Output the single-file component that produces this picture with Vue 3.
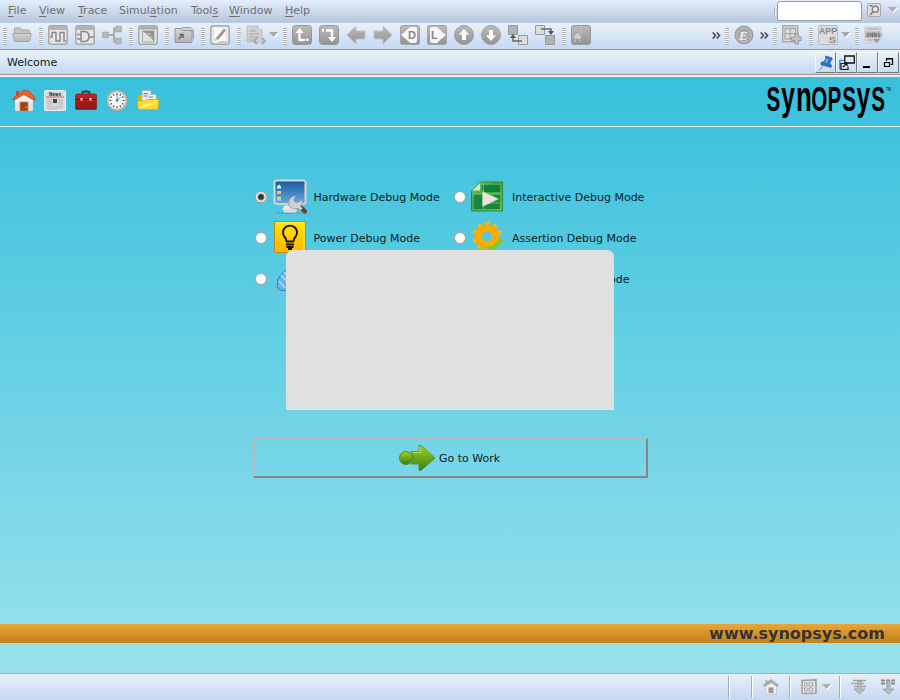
<script setup>
import { ref } from 'vue'
const menus = [['F', 'ile', ''], ['V', 'iew', ''], ['T', 'race', ''], ['a', 'tion', 'Simul'], ['s', '', 'Tool'], ['W', 'indow', ''], ['H', 'elp', '']]
const menuX = [31, 39, 41, 72, 38, 56, 40]
const left = ['|', 'folder', '|', 'wave', 'gate', 'tree', '|', 'win', '|', 'folder2', '|', 'edit', '|', 'doc', '|', 'upl', 'downr', 'back', 'fwd', 'dd', 'll', 'cup', 'cdown', 'hier1', 'hier2', '|', 'book']
const right = ['>>', '|', 'ee', '>>', '|', 'grid', '|', 'apps', '|', 'amba']
const mode = ref('hardware')
const modes = [
  { id: 'hardware', label: 'Hardware Debug Mode' },
  { id: 'interactive', label: 'Interactive Debug Mode' },
  { id: 'power', label: 'Power Debug Mode' },
  { id: 'assertion', label: 'Assertion Debug Mode' },
  { id: 'plug', label: '' },
  { id: 'last', label: 'ode' }
]
const teeth = [0, 36, 72, 108, 144, 180, 216, 252, 288, 324]
const ticks = [0, 30, 60, 90, 120, 150, 180, 210, 240, 270, 300, 330]
</script>

<template>
  <div class="app">
    <svg class="defs" width="0" height="0">
      <defs>
        <linearGradient id="gr" x1="0" y1="0" x2="0" y2="1"><stop offset="0" stop-color="#bcbcbc" /><stop offset="1" stop-color="#929292" /></linearGradient>
        <linearGradient id="lt" x1="0" y1="0" x2="0" y2="1"><stop offset="0" stop-color="#d5d5d5" /><stop offset="1" stop-color="#b4b4b4" /></linearGradient>
        <linearGradient id="scr" x1="0" y1="0" x2="0" y2="1"><stop offset="0" stop-color="#1c5a9f" /><stop offset="1" stop-color="#62a8df" /></linearGradient>
        <linearGradient id="yel" x1="0" y1="0" x2="0" y2="1"><stop offset="0" stop-color="#ffe600" /><stop offset="1" stop-color="#ffb400" /></linearGradient>
        <linearGradient id="grn" x1="0" y1="0" x2="0" y2="1"><stop offset="0" stop-color="#a2d217" /><stop offset="1" stop-color="#39801e" /></linearGradient>
        <linearGradient id="plate" x1="0" y1="0" x2="1" y2="1"><stop offset="0" stop-color="#8fd080" /><stop offset=".4" stop-color="#3fa548" /><stop offset="1" stop-color="#67bd5d" /></linearGradient>
        <linearGradient id="gear" x1="0" y1="0" x2="0" y2="1"><stop offset="0" stop-color="#ffc400" /><stop offset="1" stop-color="#f89000" /></linearGradient>
        <linearGradient id="red" x1="0" y1="0" x2="0" y2="1"><stop offset="0" stop-color="#c52222" /><stop offset="1" stop-color="#8b1515" /></linearGradient>
      </defs>
    </svg>

    <header class="menubar">
      <nav class="menus">
        <span v-for="(m, i) in menus" :key="i" class="menu" :style="{ width: menuX[i] + 'px' }">{{ m[2] }}<u>{{ m[0] }}</u>{{ m[1] }}</span>
      </nav>
      <div class="search">
        <i class="grip"></i><div class="field"></div>
        <svg class="find" width="14" height="14" viewBox="0 0 14 14"><rect x=".5" y=".5" width="13" height="13" rx="1.5" fill="#dedede" stroke="#aaa" /><path d="M2 2h4L4 4z" fill="#777" /><circle cx="8.3" cy="6.2" r="3" fill="#eee" stroke="#828282" stroke-width="1.4" /><path d="M6.2 8.6 3 12" stroke="#828282" stroke-width="1.8" /></svg>
        <svg width="10" height="6"><path d="M1 1h9L5.500 6z" fill="#fff" /><path d="M0 0h9L4.500 5z" fill="#b0adab" /></svg>
      </div>
    </header>

    <div class="toolbar">
      <div v-for="(side, si) in [left, right]" :key="si" class="tools" :class="{ right: si }">
        <template v-for="(t, i) in side" :key="i">
          <i v-if="t === '|'" class="handle"></i>
          <span v-else-if="t === '>>'" class="more"><svg width="9" height="7"><path d="M.7.5 3.500 3.500.7 6.500M4.700.5 7.500 3.500 4.700 6.500" fill="none" stroke="#444" stroke-width="1.500" /></svg></span>
          <span v-else class="tool" :class="t">
            <svg width="20" height="20" viewBox="0 0 20 20" fill="none">
              <g v-if="t === 'folder'">
                <path d="M2.500 11V4q0-1 1-1H8l1.500 2H16q1.500 0 1.500 1.500V11" fill="#c5c5c5" stroke="#a2a2a2" />
                <path d="M.8 8.500h18.400L18 15q-.3 1.500-2 1.500H4q-1.700 0-2-1.500z" fill="url(#lt)" stroke="#a5a5a5" />
              </g>
              <g v-else-if="t === 'folder2'">
                <path d="M8 4V2.500h9l1.500 2h1V14" fill="#d2d2d2" stroke="#a5a5a5" />
                <path d="M1 3.500h6l2 2h9v11q0 1-1 1H2q-1 0-1-1z" fill="url(#lt)" stroke="#949494" />
                <path d="m4.500 14 4-4M5.500 9.500H9V13" stroke="#666" stroke-width="1.500" />
              </g>
              <g v-else-if="['wave', 'gate', 'win', 'edit'].includes(t)">
                <rect x=".75" y=".75" width="18.500" height="18.500" rx="2.500" fill="#e6e6e6" stroke="#a8a8a8" stroke-width="1.500" />
                <path v-if="t === 'wave' || t === 'gate'" d="M1.500 3h17" stroke="#b3b3b3" stroke-width="4" />
                <path v-if="t === 'wave'" d="M2 12h2V7.500h4V16h4V7.500h4V16h2.500" stroke="#8a8a8a" stroke-width="1.500" />
                <path v-if="t === 'gate'" d="M6 6.500h3q5 0 5 5t-5 5H6zM2 9.500h4M2 14h4M14 12h5" stroke="#8a8a8a" stroke-width="1.500" />
                <g v-if="t === 'win'"><path d="M2 3h16" stroke="#aaa" stroke-width="3" /><rect x="4.500" y="6" width="11.500" height="11" fill="#e2e2e2" stroke="#a5a5a5" /><path d="M5 6h11v10z" fill="#909090" /><path d="M7 9h6M10 12h5" stroke="#d8d8d8" /></g>
                <g v-if="t === 'edit'"><path d="M4 3h12v14H4z" fill="#f8f8f8" /><path d="m6 13 8-9.500 2 2L8 15z" fill="#999" /><path d="M5.500 13.300 7.700 15 4.500 16z" fill="#bbb" /><path d="M9 17h8" stroke="#aaa" /></g>
              </g>
              <g v-else-if="t === 'tree'"><path d="M6 10h6M12 3v14M11 3.500h3M11 16.500h3" stroke="#adadad" stroke-width="2" /><path d="M1 7.500h5v5H1zM14 1.500h5v5h-5zM14 13.500h5v5h-5z" fill="#bcbcbc" stroke="#adadad" stroke-width="1.500" /></g>
              <g v-else-if="t === 'doc'"><path d="M1 1h11l4 4v12H1z" fill="#d2d2d2" stroke="#bcbcbc" /><path d="M12 1v4h4" fill="#eee" stroke="#bbb" /><path d="M3 6h7M3 9h10M3 12h10M3 15h5" stroke="#a6a6a6" stroke-width="1.200" /><path d="m11 13-3 3 3 3m5-6 3 3-3 3" stroke="#a8a8a8" stroke-width="2" /></g>
              <g v-else-if="t === 'upl' || t === 'downr'"><rect x=".5" y=".5" width="19" height="19" rx="3" fill="url(#gr)" stroke="#969696" /><path v-if="t === 'upl'" d="M7.500 5v10H13" stroke="#fff" stroke-width="2.300" /><path v-if="t === 'upl'" d="m3.500 8 4-5 4 5zM14 13.500h2.500V16H14z" fill="#fff" /><path v-if="t === 'downr'" d="M7 5.500h6v8" stroke="#fff" stroke-width="2.300" /><path v-if="t === 'downr'" d="M9 12h8l-4 5zM3 4h2v2.500H3z" fill="#fff" /></g>
              <path v-else-if="t === 'back'" d="M.8 10 10 1v5h9v8h-9v5z" fill="url(#gr)" stroke="#c2c2c2" />
              <path v-else-if="t === 'fwd'" d="M19.200 10 10 1v5H1v8h9v5z" fill="url(#gr)" stroke="#c2c2c2" />
              <g v-else-if="t === 'dd' || t === 'll'"><rect x=".5" y=".5" width="19" height="19" rx="2" fill="url(#gr)" stroke="#a1a1a1" /><path v-if="t === 'dd'" d="M1 10q4-3 9-8h5q2 0 2 2v12q0 2-2 2h-5q-5-5-9-8z" fill="#f5f5f5" /><path v-else d="M19 10q-4-3-9-8H5Q3 2 3 4v12q0 2 2 2h5q5-5 9-8z" fill="#f5f5f5" /><text :x="t === 'dd' ? 8 : 4" y="14" class="letter">{{ t === 'dd' ? 'D' : 'L' }}</text></g>
              <g v-else-if="t === 'cup' || t === 'cdown'"><circle cx="10" cy="10" r="9.500" fill="url(#gr)" stroke="#a0a0a0" /><path :d="t === 'cup' ? 'm10 4 5 5.500h-3V15H8V9.500H5z' : 'm10 16 5-5.500h-3V5H8v5.500H5z'" fill="#fff" /></g>
              <g v-else-if="t === 'hier1'"><path d="M.5.5h9v9h-9z" fill="#b2b2b2" stroke="#999" /><path d="M10.500 10.500h9v9h-9z" fill="#ddd" stroke="#999" /><path d="M14 16H5v-4" stroke="#666" stroke-width="1.500" /><path d="m2 13 3-4 3 4z" fill="#555" /></g>
              <g v-else-if="t === 'hier2'"><path d="M.5.5h9v9h-9z" fill="#ddd" stroke="#999" /><path d="M10.500 10.500h9v9h-9z" fill="#b2b2b2" stroke="#999" /><path d="M6 4h10v4" stroke="#666" stroke-width="1.500" /><path d="m13 6 3 4 3-4z" fill="#555" /></g>
              <g v-else-if="t === 'book'"><rect x=".5" y=".5" width="19" height="19" rx="2.500" fill="url(#gr)" stroke="#999" /><path d="M10 1v9" stroke="#c2c2c2" /><path d="m2 12 4.500-4.500L11 12v1H9l1 4H8v-3H5v3H3l1-4H2z" fill="#d0d0d0" stroke="#999" stroke-width=".6" /></g>
              <g v-else-if="t === 'ee'"><circle cx="10" cy="10" r="9" fill="#a9a9a9" stroke="#989898" /><circle cx="10" cy="10" r="7.300" stroke="#bbb" /><text x="5" y="14.500" class="letter e">E</text></g>
              <g v-else-if="t === 'grid'"><path d="M.7.7h15v16H.7z" fill="#dedede" stroke="#a8a8a8" stroke-width="1.400" /><path d="M3 3.500h10.500v10.500H3zM3 8.700h10.500M8.200 3.500V14" stroke="#a8a8a8" stroke-width="1.300" /><path d="M13 8.500h3.500V12H19v3.500h-2.500V19H13v-3.500H9.500V12H13z" fill="#c2c2c2" stroke="#999" /></g>
              <g v-else-if="t === 'apps'"><rect x=".5" y=".5" width="19" height="19" rx="1" fill="#dbdbdb" stroke="#bbb" /><text x="1" y="9" class="apps-t" textLength="18" lengthAdjust="spacingAndGlyphs">APP</text><text x="10.500" y="18" class="apps-t" textLength="7.500" lengthAdjust="spacingAndGlyphs">S</text></g>
              <g v-else-if="t === 'amba'"><path d="M1 2h16v13l-4 3H1z" fill="#d9d9d9" stroke="#ccc" /><path d="M3 4h12M3 15h6" stroke="#aaa" /><path d="M1 6.500h13V4.500l5 5.500-5 5v-2H1z" fill="#bcbcbc" /><text x="2" y="12" class="amba-t" textLength="14" lengthAdjust="spacingAndGlyphs">AMBA</text><path d="M9 14h7l-3.500 4z" fill="#999" /></g>
            </svg>
            <svg v-if="t === 'doc' || t === 'apps'" class="caret" width="10" height="6"><path d="M1 1h9L5.500 6z" fill="#fff" /><path d="M0 0h9L4.500 5z" fill="#aaa7a5" /></svg>
          </span>
        </template>
      </div>
    </div>

    <div class="titlebar">
      <span>Welcome</span>
      <div class="winbtns">
        <b><svg width="16" height="16" viewBox="0 0 16 16"><path d="m1.500 15.500 4-6" stroke="#888" /><path d="M7.500 1 14 3v2l-1.500.5-.5 3 1.500 2-.5 2L3 9.500v-2l3-.8L8 3.500z" fill="#2679cc" stroke="#155696" stroke-width=".7" /><path d="M9.500 4 8 7.500" stroke="#92c7f0" stroke-width="1.500" /></svg></b>
        <b><svg width="16" height="16" viewBox="0 0 16 16" fill="none"><path d="M.8 14V5.500h5" stroke="#3e9ef0" stroke-width="1.600" /><path d="M5.800 1h9.500v7H5.800z" fill="#dce9f8" stroke="#111" stroke-width="1.300" /><path d="M5 8.500H2V14.500h7v-3M4 12l4-4M5 8h3v3" stroke="#111" stroke-width="1.200" /></svg></b>
        <b><svg width="16" height="16"><path d="M3 12h7" stroke="#000" stroke-width="2" /></svg></b>
        <b><svg width="16" height="16" fill="none" stroke="#000"><path d="M5.500 6V3.500h6v6h-2M5 4h7" stroke-width="1.200" /><path d="M3.500 7.500h5v4h-5zM3 7.500h6" stroke-width="1.200" /></svg></b>
      </div>
    </div>

    <main>
      <div class="hero">
        <div class="quick">
          <svg width="24" height="24" viewBox="0 0 24 24"><path d="M3 9h18v13H3z" fill="#e5e5e8" stroke="#bbb" stroke-width=".5" /><path d="M12 3 3 11v2h18v-2z" fill="#f2f2f4" /><path d="M4 2h3v5H4z" fill="#cb4a2b" /><path d="m12 1 5 1 6.500 7-1.200 2.500L12 5.500 1.700 11.500.5 9.500z" fill="#e96231" stroke="#b9401c" stroke-width=".7" /><path d="M8 13h8v9H8z" fill="#a64317" stroke="#b98a63" stroke-width=".8" /><circle cx="14" cy="18" r=".8" fill="#efad60" /></svg>
          <svg width="24" height="24" viewBox="0 0 24 24"><rect x="1.500" y="1.500" width="21" height="20" rx="1" fill="#d9dadd" stroke="#f0f0f0" /><text x="6" y="6.500" class="news" textLength="12" lengthAdjust="spacingAndGlyphs">News</text><path d="M3 8h18" stroke="#d66" /><path d="M4 11h5M4 13h5M4 15h5M4 18h16M15 11h5M15 13h5M15 15h5M4 20h10" stroke="#b5b5b5" /><path d="M10 10h4v4h-4z" fill="#444" /></svg>
          <svg width="24" height="24" viewBox="0 0 24 24"><path d="M8.500 5V3.500q0-1 2-1h3q2 0 2 1V5" fill="none" stroke="#293338" stroke-width="1.800" /><rect x="1.500" y="5" width="21" height="15.500" rx="1.500" fill="url(#red)" stroke="#8e1717" stroke-width=".7" /><path d="M2 10.500h20" stroke="#751010" /><path d="M6.500 9h2v2.500h-2zM15.500 9h2v2.500h-2z" fill="#eee" /></svg>
          <svg width="24" height="24" viewBox="0 0 24 24"><circle cx="12" cy="11.500" r="10.500" fill="#f8f8f8" stroke="#7b8285" stroke-width=".7" /><circle cx="12" cy="11.500" r="9.300" fill="none" stroke="#b2b7ba" stroke-width="1.800" /><path v-for="a in ticks" :key="a" d="M12 4v1.700" :transform="`rotate(${a} 12 11.5)`" stroke="#333" stroke-width="1.100" /><path d="M12 11.500V5" stroke="#7aa3d8" stroke-width="1.200" /><path d="m12 11.500 3.500-3" stroke="#555" stroke-width=".7" /><circle cx="12" cy="11.500" r="1.300" fill="#3c78c3" /></svg>
          <svg width="24" height="24" viewBox="0 0 24 24"><path d="M2 20V7q0-1 1-1h5l1 2h12v12z" fill="#e4b400" /><path d="M6 1.500h9v11H6z" fill="#eee" stroke="#aaa" stroke-width=".6" /><path d="M7.500 4.500h4M7.500 7h5" stroke="#777" /><path d="M11 5.500h9v9h-9z" fill="#f8f8f8" stroke="#aaa" stroke-width=".6" /><path d="M12.500 8h5M12.500 10.500h5" stroke="#777" /><path d="M1.200 12h8l3-1.500h10.600l-1 10H2.500z" fill="#ffdc2c" stroke="#dba915" stroke-width=".8" /><path d="M3 19 20 13" stroke="#ffed8b" stroke-width="2" /></svg>
        </div>
        <svg class="logo" width="128" height="40">
          <text transform="scale(.6 1)" y="28"><tspan x="1" y="28" class="cap">S</tspan><tspan x="25.500" y="26.500" class="low">y</tspan><tspan x="50" y="28" class="mid">n</tspan><tspan x="75.500" y="28" class="cap">O</tspan><tspan x="102.500" y="28" class="cap">P</tspan><tspan x="127" y="28" class="cap">S</tspan><tspan x="151" y="26.500" class="low">y</tspan><tspan x="175.500" y="28" class="cap">S</tspan></text><text x="120" y="8" class="tm" textLength="5" lengthAdjust="spacingAndGlyphs">TM</text>
        </svg>
      </div>

      <div class="content">
        <div class="modes">
          <label v-for="m in modes" :key="m.id" class="mode">
            <i class="radio" :class="{ on: mode === m.id, hidden: m.id === 'last' }" @click="mode = m.id"></i>
            <svg class="ic" width="36" height="36" viewBox="0 0 36 36">
              <g v-if="m.id === 'hardware'"><ellipse cx="18" cy="34" rx="16" ry="1" fill="#62a9b8" /><path d="M13 25h10l2 6H10z" fill="#e5e7ea" /><rect x="11.500" y="30" width="13" height="3.500" rx="1" fill="#dcdfe2" /><rect x="1.500" y="0.500" width="33" height="25.500" rx="3.500" fill="#d0d9e0" stroke="#b2bfc8" /><rect x="3.500" y="2.500" width="29" height="21.500" rx="1" fill="url(#scr)" /><path d="m5 7.500 2-2 2 2v2H5z" fill="#eee" /><path d="M5 12h4v3H5z" fill="#eecf55" /><path d="M5 17.500h4v4H5z" fill="#b9d9a4" /><path d="m29 28.500 4 4" stroke="#653a35" stroke-width="4" stroke-linecap="round" /><path d="M24 16.500l-2.500 4.500 2 2.500 4-.5 2-3.500q2 4-1 7.500l2 2.500-2 2-2.500-2.300q-4 2-7.500-.7-3-3-1.500-7 1.500-4 7-5z" fill="#cfd2d4" stroke="#8a9094" stroke-width=".7" /></g>
              <g v-if="m.id === 'interactive'"><path d="M11 3h22.500v29H2.500V12z" fill="url(#plate)" stroke="#2f8a38" stroke-width="1" /><path d="M5 16h26v14H5z" fill="#16893d" /><path d="M13 6h18v7H13z" fill="#0d8239" /><path d="M4 14.500h28M14 24h18M14.500 5v25" stroke="#5bb765" stroke-width="1" /><path d="m2.500 12 9-9v9z" fill="#d4efb6" stroke="#60ae58" /><path d="m13.500 12.500 16 7.500-16 7.500z" fill="#e6e6de" stroke="#bbcdb3" stroke-width=".6" /></g>
              <g v-if="m.id === 'power'"><rect x="2.500" y="1.500" width="31" height="31" rx="1.500" fill="url(#yel)" stroke="#bf8a18" /><path d="M4 3h28v28" fill="none" stroke="#ffee63" /><path d="M14.500 21.500q0-3-2.300-5a7 7 0 1 1 11.600 0q-2.300 2-2.300 5zM14 24.500h8M14.500 27h7M16 29h4" fill="none" stroke="#151500" stroke-width="1.900" stroke-linejoin="round" /></g>
              <g v-if="m.id === 'assertion'"><g fill="url(#gear)"><path v-for="a in teeth" :key="a" d="M16 2h4l1.300 6h-6.600z" :transform="`rotate(${a} 18 16.5)`" /></g><circle cx="18" cy="16.500" r="8" fill="none" stroke="#ffac00" stroke-width="6" /><path d="m18 26 5 3.500L33 19" fill="none" stroke="#87c62b" stroke-width="4" /></g>
              <g v-if="m.id === 'plug'"><path d="m1.500 32.500 5-5" stroke="#aaa" stroke-width="2" /><path d="M5 26 6 18q2-4 8-9l8 14-8 6q-6 2-9-3z" fill="#67b5ed" stroke="#2e80c2" /><path d="m9 14 11 12M7 20l6 7M12 11l8 9" stroke="#b8e1ff" stroke-width="1.300" /></g>
            </svg>
            <span>{{ m.label }}</span>
          </label>
        </div>
        <button class="go">
          <svg width="38" height="28" viewBox="0 0 38 28"><circle cx="7" cy="14" r="6.500" fill="url(#grn)" stroke="#558717" /><path d="M12 7.500h8v-6Q21.500 1 22.500 2L36 14 22.500 26q-1 1-2.500 0v-6h-8q5-6 0-12.500z" fill="url(#grn)" stroke="#558717" stroke-width=".8" /><path d="M14 8.500h7V3" fill="none" stroke="#b9df4c" /></svg>
          <span>Go to Work</span>
        </button>
        <div class="overlay"></div>
      </div>
      <div class="orange">www.synopsys.com</div>
    </main>

    <footer>
      <i class="sep s1"></i><i class="sep s2"></i>
      <svg class="home" width="16" height="16" viewBox="0 0 16 16"><path d="M2.500 7v8h11V7L8 3z" fill="#eee" stroke="#bbb" stroke-width=".6" /><path d="M2.500 1h2v4h-2z" fill="#aaa" /><path d="M0 6 8 0l8 6-1.500 2L8 4 1.500 8z" fill="#aaa" /><path d="M5.500 8.500h5V14h-5z" fill="#999" /></svg>
      <i class="sep s3"></i>
      <svg class="panel" width="16" height="16" viewBox="0 0 16 16"><path d="M1 1.500 15 .7v13.500l-14 .3z" fill="#dedede" stroke="#a1a1a1" stroke-width="1.500" /><path d="M3.500 4h2.500v3H3.500zM8 4h3.500v3H8zM3.500 9h2.500v3H3.500zM8 9h3.500v3H8z" fill="#f4f4f4" stroke="#a4a4a4" /></svg>
      <svg class="footcaret" width="10" height="6"><path d="M1 1h9L5.500 6z" fill="#fff" /><path d="M0 0h9L4.500 5z" fill="#b0adab" /></svg>
      <i class="sep s4"></i>
      <svg v-for="n in 2" :key="n" class="down" width="16" height="16" viewBox="0 0 16 16"><path v-if="n === 1" d="M2 1.500h13M0 4.500h13M3 7.500h12" stroke="#a2a2a2" stroke-width="1.500" /><path v-else d="M1 1.500h14M1 4.500h14" stroke="#888" stroke-width="2.200" stroke-dasharray="4 1" /><path d="M7 2h3v8h4l-5.500 5L3 10h4z" fill="#bbb" stroke="#999" stroke-width=".8" /></svg>
    </footer>
  </div>
</template>

<style>
body { margin: 0; overflow: hidden; }
</style>
<style scoped>
.app { width: 900px; height: 700px; display: flex; flex-direction: column; font: 11px "DejaVu Sans", sans-serif; color: #101b20; overflow: hidden; }
.app * { box-sizing: border-box; }
.app svg { display: block; flex: none; }
.defs { height: 0; }
.menubar { height: 22px; flex: none; display: flex; justify-content: space-between; background: linear-gradient(#e3eefe, #b8c7dc); color: #6f6f6f; }
.menus { display: flex; padding-left: 8px; }
.menu { line-height: 21px; flex: none; white-space: pre; }
.menu u { text-underline-offset: 2px; }
.search { display: flex; align-items: flex-start; padding: 3px 2px 0 0; }
.grip { width: 2px; height: 10px; margin: 3px 1px 0 0; border: 1px solid #eee; border-left-color: #a9afb8; }
.field { width: 85px; height: 20px; margin: -2px 5px 0 0; background: #fff; border: 1px solid #a09c99; border-radius: 3px; }
.find { margin-right: 7px; }
.find + svg { margin-top: 4px; }
.toolbar { height: 28px; flex: none; display: flex; justify-content: space-between; background: linear-gradient(#e9f2fa, #c5d8f4); border-top: 1px solid #b5cdf0; border-bottom: 1px solid #999; padding: 2px 9px 0 3px; }
.tools { display: flex; }
.handle { flex: none; width: 4px; height: 17px; margin: 3px 5px 0 0; background: repeating-linear-gradient(#aaa 0 1px, #fff 1px 2px); }
.tool { width: 27px; flex: none; display: flex; }
.tool svg { overflow: visible; }
.tool.doc { width: 37px; }
.doc svg:first-child { margin-right: 3px; }
.caret { margin-top: 7px; }
.more { width: 13px; flex: none; padding: 7px 0 0; }
.tool.ee { width: 26px; }
.tool.apps { width: 37px; }
.apps svg:first-child { margin-right: 3px; }
.letter { font: bold 11px "Liberation Sans", sans-serif; fill: #858585; }
.letter.e { font: italic bold 13px "Liberation Serif", serif; fill: #f1f1f1; }
.apps-t { font: bold 8.500px "Liberation Sans", sans-serif; fill: #8a8a8a; }
.amba-t { font: bold 6px "DejaVu Serif", serif; fill: #555; }
.titlebar { height: 27px; flex: none; display: flex; justify-content: space-between; background: linear-gradient(#e8f1f9, #c4d7f3); border-top: 2px solid #eee; border-bottom: 2px solid #eee; box-shadow: inset 0 -1px #999; padding: 0 1px 0 7px; line-height: 21px; }
.winbtns { display: flex; }
.winbtns b { width: 21px; height: 21px; border: 1px solid #f5f5f5; border-right-color: #777; border-bottom-color: #777; padding: 2px; }
main { flex: 1; display: flex; flex-direction: column; background: linear-gradient(#38c0dc, #99e2ed); }
.hero { height: 50px; flex: none; display: flex; justify-content: space-between; border-bottom: 1px solid #f4f7f8; box-shadow: inset 0 -1px #72adb7; }
.quick { display: flex; gap: 7px; padding: 12px 0 0 12px; }
.logo { margin: 6px 6px 0 0; overflow: visible; }
.logo text { fill: #000; }
.cap { font: bold 34.500px "Liberation Sans", sans-serif; }
.low { font: bold 41px "Liberation Sans", sans-serif; }
.mid { font: bold 43px "Liberation Sans", sans-serif; }
.logo .tm { font: 5px "Liberation Sans", sans-serif; }
.news { font: bold 5.500px "DejaVu Sans", sans-serif; fill: #333; }
.content { flex: none; height: 497px; position: relative; padding: 49.500px 0 0 254.500px; }
.modes { display: grid; grid-template-columns: 199px 200px; grid-auto-rows: 41px; height: 261.500px; align-content: start; }
.mode { display: flex; align-items: center; height: 41px; }
.radio { width: 12px; height: 12px; flex: none; border-radius: 50%; background: #fff; border: 1px solid #aa9e99; margin: 0 5px 0 .500px; }
.radio.on { background: radial-gradient(circle, #333 0 2px, #777 3px, #f3f3f3 4px); }
.radio.hidden { visibility: hidden; }
.mode .ic { margin-right: 5.500px; }
.mode:nth-child(even) .ic { margin-left: -2px; margin-right: 7px; }
.mode:last-child span { margin-left: 97px; }
.go { width: 395px; height: 40px; margin-left: -1.500px; padding: 0 2px 0 0; display: flex; align-items: center; justify-content: center; gap: 2px; background: transparent; border: 2px solid; border-color: #bab9b9 #858585 #858585 #bab9b9; font: inherit; color: inherit; }
.overlay { position: absolute; left: 286px; top: 123px; width: 328px; height: 160px; background: #e0e0e0; border-radius: 7px 7px 0 0; }
.orange { height: 19px; flex: none; background: linear-gradient(#eba534, #bf801c); color: #333; text-align: right; padding-right: 15px; font: bold 16px/19px "DejaVu Sans", sans-serif; }
footer { height: 27px; flex: none; display: flex; align-items: center; background: linear-gradient(#e7f0f9, #c5d8f3); border-top: 1px solid #8eb3df; padding-left: 728px; }
.sep { width: 2px; height: 22px; background: linear-gradient(90deg, #aaa 50%, #fff 50%); flex: none; }
.s2 { margin-left: 21px; }.home { margin-left: 10px; }.s3 { margin-left: 10px; }
.panel { margin-left: 10px; }.footcaret { margin-left: 5px; }.s4 { margin-left: 7px; }
.down { margin-left: 10px; }.down + .down { margin-left: 13px; }
</style>
